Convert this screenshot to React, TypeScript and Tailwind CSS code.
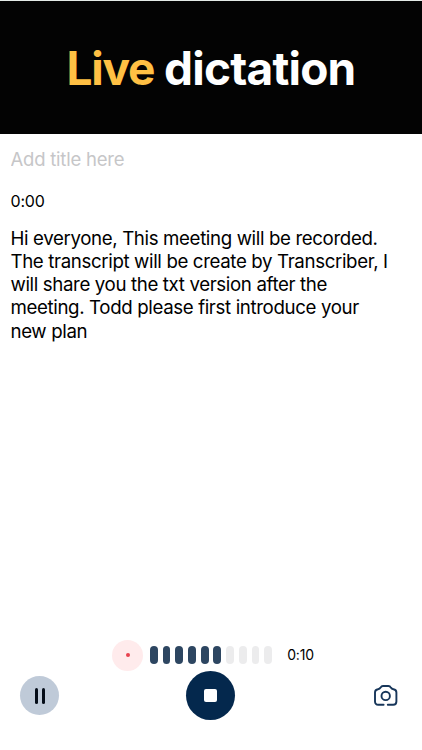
import { useState } from 'react'

const transcript_lines = [
  'Hi everyone, This meeting will be recorded.',
  'The transcript will be create by Transcriber, I',
  'will share you the txt version after the',
  'meeting. Todd please first introduce your',
  'new plan',
]

const n_bars = 10
const level = 6

function CameraIcon() {
  return (
    <svg width="24" height="21" viewBox="0 0 24 21" fill="none" stroke="#17365a" strokeWidth="1.9" strokeLinecap="round">
      <path d="M9.6 19.7H4.2C2.2 19.7 1 18.4 1 16.4V7.6C1 5.7 2.1 4.6 4 4.3C5.3 4.1 6 3.6 6.6 2.6C7.2 1.4 7.9 1 9 1H14.4C15.5 1 16.2 1.4 16.8 2.6C17.4 3.6 18.1 4.1 19.4 4.3C21.3 4.6 22.4 5.7 22.4 7.6V16.4C22.4 18.4 21.2 19.7 19.2 19.7H13.8" />
      <circle cx="11.7" cy="10.9" r="4.2" />
    </svg>
  )
}

export default function App() {
  const [title, set_title] = useState('')

  return (
    <div className="flex h-[750px] w-[422px] flex-col overflow-hidden bg-white font-['Inter',sans-serif] text-black">
      <header className="flex h-[134px] shrink-0 items-center justify-center border-t border-[#e4ebe7] bg-[#030303]">
        <h1 className="text-[46px] leading-none font-bold tracking-[-0.8px] whitespace-nowrap text-white">
          <span className="tracking-[-1.3px] text-[#ffc044]">Live</span> dictation
        </h1>
      </header>

      <main className="flex flex-1 flex-col px-[10.5px] pt-[13px]">
        <input
          value={title}
          onChange={e => set_title(e.target.value)}
          placeholder="Add title here"
          className="h-6 text-[18.5px] leading-6 tracking-[-0.22px] outline-none placeholder:text-[#c6c6c8]"
        />
        <div className="mt-[20px] text-[16px] leading-5 tracking-[-0.2px]">0:00</div>
        <div className="mt-[15.5px] text-[18.7px] leading-[23.3px] tracking-[-0.37px] whitespace-nowrap">
          {transcript_lines.map(line => (
            <p key={line}>{line}</p>
          ))}
        </div>
      </main>

      <footer className="flex h-[111px] shrink-0 flex-col">
        {/* Recording level */}
        <div className="flex h-[32px] items-center pl-[112px]">
          <div className="flex size-[31px] items-center justify-center rounded-full bg-[#ffebec]">
            <span className="size-[4px] rounded-full bg-[#e8424f]" />
          </div>
          <div className="ml-[6.8px] flex gap-[4.95px]">
            {[...Array(n_bars)].map((_, i) => (
              <span key={i} className={`h-[18px] w-[7.8px] rounded-full ${i < level ? 'bg-[#2d4661]' : 'bg-[#ececed]'}`} />
            ))}
          </div>
          <span className="ml-[15px] text-[14px] leading-none tracking-[-0.2px]">0:10</span>
        </div>

        {/* Controls */}
        <div className="grid h-[49px] grid-cols-[1fr_49px_1fr] items-center pr-[24px] pl-[22px]">
          <button className="-ml-[2px] flex size-[39px] items-center justify-center gap-[4px] rounded-full bg-[#bfcad8]">
            <span className="h-[16px] w-[3px] rounded-full bg-[#050d18]" />
            <span className="h-[16px] w-[3px] rounded-full bg-[#050d18]" />
          </button>
          <button className="flex size-[49px] items-center justify-center rounded-full bg-[#04284d]">
            <span className="size-[13px] rounded-[2px] bg-white" />
          </button>
          <button className="justify-self-end">
            <CameraIcon />
          </button>
        </div>
      </footer>
    </div>
  )
}
